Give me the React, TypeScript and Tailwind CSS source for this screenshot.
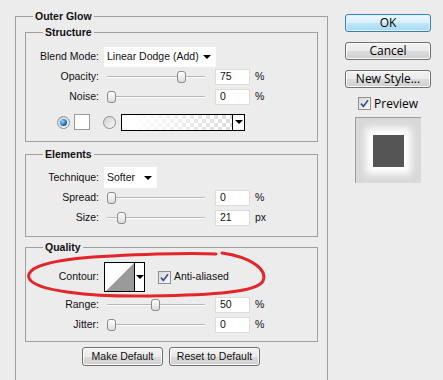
import React from "react";

// ---------------------------------------------------------------------------
// Small controls
// ---------------------------------------------------------------------------

const Arrow = () => (
  <span className="h-0 w-0 border-x-[4px] border-t-[4px] border-x-transparent border-t-black" />
);

const Check = () => (
  <span className="flex h-[13px] w-[13px] shrink-0 items-center justify-center border border-[#8e8f8f] bg-[linear-gradient(135deg,#d8d8d8,#fbfbfb)]">
    <svg width="9" height="9" viewBox="0 0 9 9">
      <path d="M1 4.6 L3.4 7.4 L8 1.2" fill="none" stroke="#3b4f96" strokeWidth="1.7" />
    </svg>
  </span>
);

const Radio = ({ on }: { on?: boolean }) => (
  <span className="flex h-[13px] w-[13px] shrink-0 items-center justify-center rounded-full border border-[#8e8f8f] bg-[linear-gradient(135deg,#cfcfcf,#fafafa)]">
    {on && (
      <span className="h-[7px] w-[7px] rounded-full bg-[radial-gradient(circle_at_35%_35%,#9ad6ff,#0b5ea8_70%)]" />
    )}
  </span>
);

const Slider = ({ pos }: { pos: number }) => (
  <div className="relative ml-[3px] flex h-[12px] w-[98px] items-center">
    <div className="h-[2px] w-full border-t border-[#b7b7b7] bg-white" />
    <div
      className="absolute top-0 h-[12px] w-[9px] rounded-[3px] border border-[#8b8b8b] bg-[linear-gradient(#ffffff,#dcdcdc)]"
      style={{ left: pos }}
    />
  </div>
);

const Num = ({ v, unit }: { v: string; unit: string }) => (
  <>
    <div className="ml-[10px] flex h-[16px] w-[35px] items-center border border-[#dcdcdc] bg-white pl-[4px]">
      {v}
    </div>
    <span className="ml-[5px]">{unit}</span>
  </>
);

const Row = ({
  label,
  className,
  children,
}: {
  label: string;
  className: string;
  children: React.ReactNode;
}) => (
  <div className={className}>
    <div className="w-[73px] shrink-0 text-right">{label}</div>
    {children}
  </div>
);

const SliderRow = ({
  label,
  pos,
  v,
  unit,
}: {
  label: string;
  pos: number;
  v: string;
  unit: string;
}) => (
  <Row label={label} className="flex h-[20px] items-center">
    <div className="ml-[5px]" />
    <Slider pos={pos} />
    <Num v={v} unit={unit} />
  </Row>
);

const Btn = ({ w, children }: { w: string; children: React.ReactNode }) => (
  <div
    className={`flex h-[19px] items-center justify-center rounded-[3px] border border-[#707070] bg-[linear-gradient(#f2f2f2_0%,#ebebeb_50%,#dddddd_50%,#cfcfcf_100%)] shadow-[inset_0_0_0_1px_#fbfbfb] ${w}`}
  >
    {children}
  </div>
);

// ---------------------------------------------------------------------------
// Dialog
// ---------------------------------------------------------------------------

export default function App() {
  return (
    <div className="relative flex h-[380px] w-[443px] overflow-hidden bg-[#ececec] font-['Liberation_Sans',Arial,sans-serif] text-[10.5px] text-[#111]">
      {/* Outer Glow group */}
      <fieldset className="ml-[15px] mt-[9px] h-[390px] w-[313px] shrink-0 border border-[#a0a0a0] px-[9px]">
        <legend className="ml-[8px] px-[2px] font-bold leading-[14px]">Outer Glow</legend>

        {/* Structure */}
        <fieldset className="mt-[2px] border border-[#a0a0a0]">
          <legend className="ml-[17px] px-[2px] font-bold leading-[14px]">Structure</legend>
          <div className="flex flex-col pb-[11px] pt-[8px]">
            <Row label="Blend Mode:" className="flex h-[20px] items-center">
              <div className="ml-[5px] flex h-[20px] w-[112px] items-center justify-between bg-white pl-[3px] pr-[5px]">
                Linear Dodge (Add)
                <Arrow />
              </div>
            </Row>
            <SliderRow label="Opacity:" pos={70} v="75" unit="%" />
            <SliderRow label="Noise:" pos={0} v="0" unit="%" />
            <div className="mt-[7px] flex h-[16px] items-center pl-[31px]">
              <Radio on />
              <div className="ml-[4px] h-[16px] w-[16px] border border-[#9a9a9a] bg-white" />
              <div className="ml-[13px]">
                <Radio />
              </div>
              <div className="ml-[5px] flex h-[17px] w-[124px] border border-black">
                <div className="flex-1 bg-[linear-gradient(to_right,#ffffff_8%,rgba(255,255,255,0)_95%),repeating-conic-gradient(#dedede_0_25%,#ffffff_0_50%)] bg-[length:100%_100%,8px_8px]" />
                <div className="flex w-[12px] items-center justify-center border-l border-black bg-white">
                  <Arrow />
                </div>
              </div>
            </div>
          </div>
        </fieldset>

        {/* Elements */}
        <fieldset className="mt-[5px] border border-[#a0a0a0]">
          <legend className="ml-[17px] px-[2px] font-bold leading-[14px]">Elements</legend>
          <div className="flex flex-col pb-[8px] pt-[6px]">
            <Row label="Technique:" className="flex h-[21px] items-center">
              <div className="ml-[5px] flex h-[21px] w-[53px] items-center justify-between bg-white pl-[3px] pr-[5px]">
                Softer
                <Arrow />
              </div>
            </Row>
            <SliderRow label="Spread:" pos={0} v="0" unit="%" />
            <SliderRow label="Size:" pos={10} v="21" unit="px" />
          </div>
        </fieldset>

        {/* Quality */}
        <fieldset className="mt-[3px] border border-[#a0a0a0]">
          <legend className="ml-[17px] px-[2px] font-bold leading-[14px]">Quality</legend>
          <div className="flex flex-col pb-[6px] pt-[8px]">
            <Row label="Contour:" className="flex h-[30px] items-center">
              <div className="ml-[5px] flex h-[30px] w-[41px] border border-black bg-white">
                <svg width="29" height="28" viewBox="0 0 29 28" className="shrink-0">
                  <polygon points="1,28 29,0 29,28" fill="#9a9a9a" />
                </svg>
                <div className="flex w-[10px] items-center justify-center border-l border-black">
                  <Arrow />
                </div>
              </div>
              <div className="ml-[13px] flex items-center gap-[3px]">
                <Check />
                Anti-aliased
              </div>
            </Row>
            <div className="mt-[3px]" />
            <SliderRow label="Range:" pos={44} v="50" unit="%" />
            <SliderRow label="Jitter:" pos={0} v="0" unit="%" />
          </div>
        </fieldset>

        <div className="ml-[57px] mt-[5px] flex gap-[6px]">
          <Btn w="w-[81px]">Make Default</Btn>
          <Btn w="w-[91px]">Reset to Default</Btn>
        </div>
      </fieldset>

      {/* Right column */}
      <div className="ml-[17px] mt-[14px] flex w-[86px] shrink-0 flex-col items-center font-['Open_Sans',Arial,sans-serif] text-[12px] text-black">
        <div className="flex h-[18px] w-full items-center justify-center rounded-[3px] border border-[#3c7fb1] bg-[linear-gradient(#eaf6fd_0%,#d9f0fc_50%,#bee6fd_50%,#a7d9f5_100%)] shadow-[inset_0_0_0_1px_#dff3fc]">
          OK
        </div>
        <div className="mt-[10px] flex h-[18px] w-full items-center justify-center rounded-[3px] border border-[#707070] bg-[linear-gradient(#f2f2f2_0%,#ebebeb_50%,#dddddd_50%,#cfcfcf_100%)] shadow-[inset_0_0_0_1px_#fbfbfb]">
          Cancel
        </div>
        <div className="mt-[10px] flex h-[18px] w-full items-center justify-center rounded-[3px] border border-[#707070] bg-[linear-gradient(#f2f2f2_0%,#ebebeb_50%,#dddddd_50%,#cfcfcf_100%)] shadow-[inset_0_0_0_1px_#fbfbfb]">
          New Style...
        </div>
        <div className="mt-[9px] flex h-[13px] items-center gap-[3px]">
          <Check />
          Preview
        </div>
        <div className="mt-[7px] flex h-[66px] w-[66px] items-center justify-center overflow-hidden border-l border-t border-[#9c9c9c] bg-[#d9d9d9]">
          <div className="h-[32px] w-[31px] bg-[#555555] shadow-[0_0_7px_7px_#ffffff]" />
        </div>
      </div>

      {/* Red annotation ellipse */}
      <svg
        className="pointer-events-none absolute left-0 top-0"
        width="443"
        height="380"
        viewBox="0 0 443 380"
      >
        <path
          d="M222 253 C250 257, 268 269, 263 281 C257 292, 215 295, 150 296 C90 297, 34 291, 29 278 C25 265, 62 258, 112 256 C152 254, 192 253, 216 254"
          fill="none"
          stroke="#e3262c"
          strokeWidth="3"
          strokeLinecap="round"
        />
      </svg>
    </div>
  );
}
